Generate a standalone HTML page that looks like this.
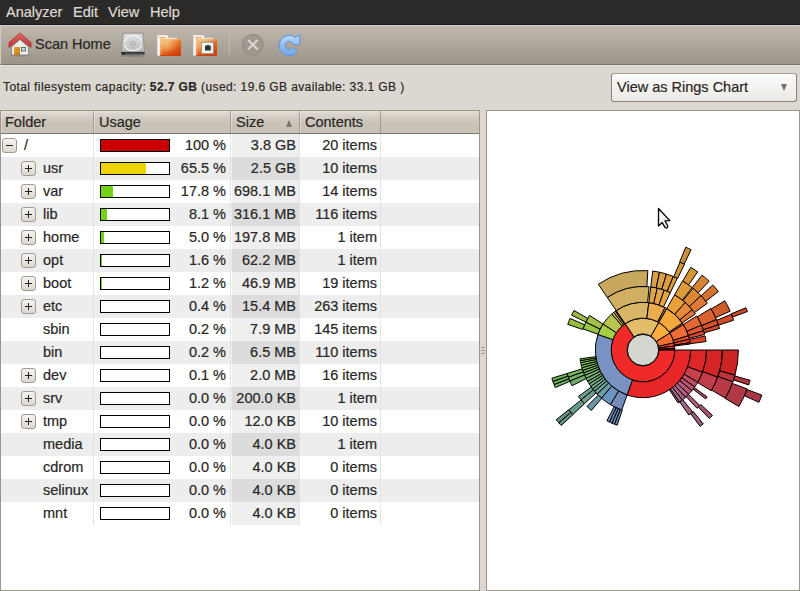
<!DOCTYPE html>
<html><head><meta charset="utf-8">
<style>
*{margin:0;padding:0;box-sizing:border-box}
html,body{-webkit-text-stroke:0.2px;width:800px;height:591px;overflow:hidden;background:#dcd8d1;font-family:"Liberation Sans",sans-serif;color:#282725}
.abs{position:absolute}
#menubar{left:0;top:0;width:800px;height:25px;background:#2c2a28;border-bottom:1px solid #1c1b19;color:#dfdbd2;font-size:14.5px}
#menubar span{position:absolute;top:4px}
#toolbar{left:0;top:25px;width:800px;height:40px;background:linear-gradient(#bfb8ae,#9c9488);border-top:1px solid #d2cdc5;border-bottom:1px solid #7a7268;border-left:1px solid #cfc9bf}
#tbhl{left:0;top:65px;width:800px;height:1px;background:#e6e2dc}
#info{left:3px;top:80px;font-size:12px;letter-spacing:0.4px;color:#282725;white-space:nowrap}
#combo{left:611px;top:73px;width:186px;height:29px;border:1px solid #8a8276;border-top-color:#a9a194;border-radius:3px;background:linear-gradient(#fbfbfa,#ece9e5);font-size:14.5px}
#combo .t{position:absolute;left:5px;top:5px}
#combo .arr{position:absolute;left:169px;top:10px;width:0;height:0;border-left:3.6px solid transparent;border-right:3.6px solid transparent;border-top:7px solid #707070}
#left{left:0;top:110px;width:480px;height:481px;background:#fff;border:1px solid #9c9486}
#right{left:486px;top:110px;width:314px;height:481px;background:#fff;border:1px solid #9c9486}
#hdr{left:1px;top:111px;width:478px;height:23px;background:linear-gradient(#e6e2dc 0px,#ddd8d0 2px,#d0c9bf 8px,#c9c2b7 13px,#c9c2b7 20px,#cec7bc 22px);border-bottom:1px solid #7d7568}
.hc{position:absolute;top:0;height:22px;border-right:1px solid #a59e92;font-size:14.5px;box-shadow:inset 1px 0 0 rgba(255,255,255,0.35)}
.hc span{position:absolute;top:3px}
.row{position:absolute;left:1px;width:478px;height:23px;font-size:14.5px}
.row.alt{background:#ededed}
.row span{position:absolute;top:3px;white-space:nowrap}
.vl{position:absolute;top:134px;height:391px;width:1px;background:#e3e3e3}
.sortcol{position:absolute;left:231px;width:68px;height:23px}
.bar{position:absolute;left:99px;top:5px;width:70px;height:13px;border:1px solid #000;background:#fff}
.bar i{position:absolute;left:0;top:0;bottom:0;display:block}
.exp{position:absolute;top:4px;width:15px;height:15px;border:1px solid #a29b90;border-radius:3px;background:linear-gradient(#f5f3f0,#dcd7cf)}
.exp:before{content:"";position:absolute;left:3px;top:6px;width:7px;height:1px;background:#222}
.exp.p:after{content:"";position:absolute;left:6px;top:3px;width:1px;height:7px;background:#222}
#bottom{left:0;top:590px;width:800px;height:1px;background:#8f877a}
</style></head><body>
<div id="menubar" class="abs"><span style="left:6px">Analyzer</span><span style="left:73px">Edit</span><span style="left:108px">View</span><span style="left:150px">Help</span></div>
<div id="toolbar" class="abs"></div><div id="tbhl" class="abs"></div>
<svg class="abs" style="left:0;top:25px" width="320" height="39" viewBox="0 25 320 39">
<defs>
<linearGradient id="roof" x1="0" y1="0" x2="0" y2="1"><stop offset="0" stop-color="#e26a6a"/><stop offset="1" stop-color="#c23030"/></linearGradient>
<linearGradient id="door" x1="0" y1="0" x2="1" y2="1"><stop offset="0" stop-color="#e9a830"/><stop offset="1" stop-color="#b87408"/></linearGradient>
<linearGradient id="disk" x1="0" y1="0" x2="0" y2="1"><stop offset="0" stop-color="#dedede"/><stop offset="0.5" stop-color="#d2d2d2"/><stop offset="1" stop-color="#b4b4b4"/></linearGradient>
<linearGradient id="diskb" x1="0" y1="0" x2="0" y2="1"><stop offset="0" stop-color="#2a2a2a"/><stop offset="0.6" stop-color="#5e5e5e"/><stop offset="1" stop-color="#8a8a8a"/></linearGradient>
<linearGradient id="fold" x1="0" y1="0" x2="0.6" y2="1"><stop offset="0" stop-color="#f5b060"/><stop offset="0.45" stop-color="#ea7a2a"/><stop offset="1" stop-color="#d2400c"/></linearGradient>
<linearGradient id="refr" x1="0" y1="0" x2="0" y2="1"><stop offset="0" stop-color="#b4d2f6"/><stop offset="1" stop-color="#74a6e6"/></linearGradient>
<radialGradient id="foldhl" cx="0.3" cy="0.25" r="0.6"><stop offset="0" stop-color="#f8d090" stop-opacity="0.75"/><stop offset="1" stop-color="#f8d090" stop-opacity="0"/></radialGradient>
</defs>
<!-- home -->
<g transform="translate(4,28)">
<ellipse cx="16" cy="27.5" rx="10" ry="1.2" fill="#000" opacity="0.12"/>
<path d="M7.5,19 L16,11.5 L24.5,19 L24.5,27 L7.5,27 Z" fill="#eeeeec" stroke="#888a85" stroke-width="1"/>
<rect x="10" y="19" width="6" height="8" fill="url(#door)"/>
<circle cx="14.6" cy="23.5" r="0.5" fill="#f8e060"/>
<rect x="17.5" y="19.5" width="4" height="3.5" fill="#c8dce4" stroke="#6a6a6a" stroke-width="1"/>
<path d="M5,14.5 L16,5 L27,14.5 L27,19.5 L16,10.5 L5,19.5 Z" fill="url(#roof)" stroke="#b02a2a" stroke-width="0.8" stroke-linejoin="round"/>
</g>
<!-- disk -->
<g transform="translate(116,28)">
<ellipse cx="16.8" cy="28" rx="12" ry="1.2" fill="#000" opacity="0.15"/>
<path d="M7.3,5.2 L26.8,5.2 L28.6,24 L5.1,24 Z" fill="url(#disk)" stroke="#8e8e8e" stroke-width="0.9"/>
<path d="M9,14 Q10,8 17,7.5 Q24.5,8 25.5,13" fill="none" stroke="#fafafa" stroke-width="1.1"/>
<path d="M8.5,16.5 Q10,22.5 17,22.5 Q24,22.5 25.5,17" fill="none" stroke="#f4f4f4" stroke-width="1.1"/>
<ellipse cx="16.8" cy="15.5" rx="2.6" ry="1.7" fill="none" stroke="#9a9a9a" stroke-width="0.8"/>
<rect x="5" y="24" width="23.7" height="3.8" rx="0.8" fill="url(#diskb)"/>
<rect x="6.5" y="25" width="2.2" height="1.4" fill="#0a0a0a"/>
</g>
<!-- folder -->
<g transform="translate(152,28)">
<path d="M5.4,7.3 L15.7,7.3 L16.5,10 L25.4,10 L25.4,27.6 L5.4,27.6 Z" fill="#fafafa" stroke="#d8d8d8" stroke-width="0.6"/>
<rect x="7" y="9" width="6.8" height="1.2" fill="#f0a060"/>
<rect x="7.9" y="10.8" width="21.1" height="17.1" fill="url(#fold)"/>
<rect x="7.9" y="10.8" width="21.1" height="17.1" fill="url(#foldhl)"/>
<path d="M9,27 L9,11.9 L28.5,11.9" fill="none" stroke="#f8d0a0" stroke-width="0.9" opacity="0.7"/><rect x="7.9" y="27" width="21.1" height="0.9" fill="#c03008" opacity="0.6"/>
</g>
<!-- folder remote -->
<g transform="translate(188,28)">
<path d="M5.4,7.3 L15.7,7.3 L16.5,10 L25.4,10 L25.4,27.6 L5.4,27.6 Z" fill="#fafafa" stroke="#d8d8d8" stroke-width="0.6"/>
<rect x="7" y="9" width="6.8" height="1.2" fill="#f0a060"/>
<rect x="7.9" y="10.8" width="21.1" height="17.1" fill="url(#fold)"/>
<rect x="7.9" y="10.8" width="21.1" height="17.1" fill="url(#foldhl)"/>
<path d="M9,27 L9,11.9 L28.5,11.9" fill="none" stroke="#f8d0a0" stroke-width="0.9" opacity="0.7"/><rect x="7.9" y="27" width="21.1" height="0.9" fill="#c03008" opacity="0.6"/>
<rect x="13.5" y="14.2" width="12" height="11.5" fill="#f2f2ef" stroke="#8a8a86" stroke-width="0.8"/>
<path d="M17,17.8 L18.6,17.8 L18.6,17 L21.2,17 L21.2,17.8 L22.8,17.8 L22.8,22.6 L17,22.6 Z" fill="#2e3436"/>
</g>
<!-- separator -->
<rect x="227.5" y="34.6" width="1" height="19.3" fill="#948c80" opacity="0.5"/>
<rect x="228.5" y="34.6" width="1" height="19.3" fill="#d8d2c8" opacity="0.7"/>
<!-- stop -->
<circle cx="252.8" cy="44.7" r="10.5" fill="#a0988f" stroke="#8f877e" stroke-width="0.8"/>
<path d="M248.6,40.5 L257,48.9 M257,40.5 L248.6,48.9" stroke="#dcd8d2" stroke-width="2" stroke-linecap="round"/>
<!-- refresh -->
<g transform="translate(274,30)">
<path d="M23.66,21.25 A10.2,10.2 0 1 1 21.3,7.1 L25.9,4.8 L25.9,14.7 L19.2,14.7 A4,4 0 1 0 18.58,17.69 Z" fill="url(#refr)" stroke="#5b95de" stroke-width="1" stroke-linejoin="round"/>
<path d="M9,12 A7,7 0 0 1 19,9" fill="none" stroke="#d4e6fa" stroke-width="1" opacity="0.7"/>
</g>
</svg>
<div class="abs" style="left:35px;top:36px;font-size:14.5px;color:#282725">Scan Home</div>
<div id="info" class="abs">Total filesystem capacity: <b>52.7 GB</b> (used: 19.6 GB available: 33.1 GB )</div>
<div id="combo" class="abs"><span class="t">View as Rings Chart</span><div class="arr"></div></div>
<div id="left" class="abs"></div>
<div id="right" class="abs"></div><!--chart--><svg class="abs" style="left:0;top:0" width="800" height="591" viewBox="0 0 800 591"><g stroke="#000" stroke-width="1" stroke-linejoin="miter"><path d="M658.90,350.00A15.90,15.90 0 1 1 634.06,336.85L625.13,323.70A31.80,31.80 0 1 0 674.80,350.00Z" fill="#f02929"/><path d="M634.06,336.85A15.90,15.90 0 0 1 650.93,336.22L658.85,322.43A31.80,31.80 0 0 0 625.13,323.70Z" fill="#e1bd6a"/><path d="M650.93,336.22A15.90,15.90 0 0 1 656.44,341.50L669.88,333.01A31.80,31.80 0 0 0 658.85,322.43Z" fill="#fcad40"/><path d="M656.44,341.50A15.90,15.90 0 0 1 658.49,346.42L673.98,342.85A31.80,31.80 0 0 0 669.88,333.01Z" fill="#f77035"/><path d="M658.49,346.42A15.90,15.90 0 0 1 658.77,348.01L674.55,346.01A31.80,31.80 0 0 0 673.98,342.85Z" fill="#f2462e"/><path d="M658.77,348.01A15.90,15.90 0 0 1 658.88,349.20L674.76,348.39A31.80,31.80 0 0 0 674.55,346.01Z" fill="#f1392c"/><path d="M658.88,349.20A15.90,15.90 0 0 1 658.90,349.83L674.80,349.67A31.80,31.80 0 0 0 674.76,348.39Z" fill="#f02f2a"/><path d="M674.80,350.00A31.80,31.80 0 0 1 632.38,379.98L627.08,394.96A47.70,47.70 0 0 0 690.70,350.00Z" fill="#e72727"/><path d="M632.38,379.98A31.80,31.80 0 0 1 612.93,339.65L597.90,334.47A47.70,47.70 0 0 0 627.08,394.96Z" fill="#7893c2"/><path d="M612.93,339.65A31.80,31.80 0 0 1 616.33,332.68L603.00,324.02A47.70,47.70 0 0 0 597.90,334.47Z" fill="#a1ce43"/><path d="M616.33,332.68A31.80,31.80 0 0 1 622.18,325.96L611.77,313.95A47.70,47.70 0 0 0 603.00,324.02Z" fill="#b6c550"/><path d="M622.18,325.96A31.80,31.80 0 0 1 623.51,324.87L613.76,312.31A47.70,47.70 0 0 0 611.77,313.95Z" fill="#cfba5f"/><path d="M623.51,324.87A31.80,31.80 0 0 1 624.58,324.08L615.37,311.12A47.70,47.70 0 0 0 613.76,312.31Z" fill="#d4b862"/><path d="M624.58,324.08A31.80,31.80 0 0 1 625.13,323.70L616.19,310.55A47.70,47.70 0 0 0 615.37,311.12Z" fill="#d7b764"/><path d="M625.13,323.70A31.80,31.80 0 0 1 646.88,318.44L648.81,302.66A47.70,47.70 0 0 0 616.19,310.55Z" fill="#d9b666"/><path d="M646.88,318.44A31.80,31.80 0 0 1 657.68,321.79L665.03,307.69A47.70,47.70 0 0 0 648.81,302.66Z" fill="#ebac4e"/><path d="M657.68,321.79A31.80,31.80 0 0 1 658.66,322.32L666.49,308.48A47.70,47.70 0 0 0 665.03,307.69Z" fill="#f2a73f"/><path d="M658.85,322.43A31.80,31.80 0 0 1 669.27,332.08L682.40,323.12A47.70,47.70 0 0 0 666.78,308.65Z" fill="#f3a73d"/><path d="M669.27,332.08A31.80,31.80 0 0 1 669.88,333.01L683.32,324.51A47.70,47.70 0 0 0 682.40,323.12Z" fill="#ee7034"/><path d="M669.88,333.01A31.80,31.80 0 0 1 673.33,340.44L688.49,335.66A47.70,47.70 0 0 0 683.32,324.51Z" fill="#ed6c33"/><path d="M673.33,340.44A31.80,31.80 0 0 1 673.98,342.85L689.48,339.27A47.70,47.70 0 0 0 688.49,335.66Z" fill="#ea4c2e"/><path d="M673.98,342.85A31.80,31.80 0 0 1 674.43,345.14L690.14,342.70A47.70,47.70 0 0 0 689.48,339.27Z" fill="#e9432c"/><path d="M674.43,345.14A31.80,31.80 0 0 1 674.55,346.01L690.32,344.02A47.70,47.70 0 0 0 690.14,342.70Z" fill="#e93a2b"/><path d="M690.70,350.00A47.70,47.70 0 0 1 687.65,366.78L702.53,372.38A63.60,63.60 0 0 0 706.60,350.00Z" fill="#de2626"/><path d="M687.65,366.78A47.70,47.70 0 0 1 684.10,374.21L697.80,382.28A63.60,63.60 0 0 0 702.53,372.38Z" fill="#c9404e"/><path d="M684.10,374.21A47.70,47.70 0 0 1 681.78,377.77L694.71,387.02A63.60,63.60 0 0 0 697.80,382.28Z" fill="#bf4d62"/><path d="M681.78,377.77A47.70,47.70 0 0 1 679.65,380.53L691.86,390.71A63.60,63.60 0 0 0 694.71,387.02Z" fill="#b9546c"/><path d="M679.65,380.53A47.70,47.70 0 0 1 677.20,383.25L688.60,394.34A63.60,63.60 0 0 0 691.86,390.71Z" fill="#b55974"/><path d="M677.20,383.25A47.70,47.70 0 0 1 674.79,385.56L685.39,397.41A63.60,63.60 0 0 0 688.60,394.34Z" fill="#b15f7d"/><path d="M674.79,385.56A47.70,47.70 0 0 1 672.50,387.49L682.33,399.98A63.60,63.60 0 0 0 685.39,397.41Z" fill="#ac6484"/><path d="M672.50,387.49A47.70,47.70 0 0 1 670.36,389.07L679.48,402.10A63.60,63.60 0 0 0 682.33,399.98Z" fill="#a9698c"/><path d="M670.36,389.07A47.70,47.70 0 0 1 669.33,389.78L678.10,403.04A63.60,63.60 0 0 0 679.48,402.10Z" fill="#a66d92"/><path d="M627.08,394.96A47.70,47.70 0 0 1 618.58,390.97L610.43,404.63A63.60,63.60 0 0 0 621.77,409.95Z" fill="#748dbb"/><path d="M618.58,390.97A47.70,47.70 0 0 1 611.77,386.05L601.36,398.07A63.60,63.60 0 0 0 610.43,404.63Z" fill="#6a93bf"/><path d="M611.77,386.05A47.70,47.70 0 0 1 608.57,383.02L597.10,394.02A63.60,63.60 0 0 0 601.36,398.07Z" fill="#6e9ea7"/><path d="M608.57,383.02A47.70,47.70 0 0 1 606.67,380.92L594.57,391.22A63.60,63.60 0 0 0 597.10,394.02Z" fill="#70a39a"/><path d="M606.67,380.92A47.70,47.70 0 0 1 605.26,379.17L592.68,388.89A63.60,63.60 0 0 0 594.57,391.22Z" fill="#71a792"/><path d="M605.26,379.17A47.70,47.70 0 0 1 603.88,377.29L590.84,386.39A63.60,63.60 0 0 0 592.68,388.89Z" fill="#72aa8b"/><path d="M603.88,377.29A47.70,47.70 0 0 1 602.59,375.35L589.12,383.80A63.60,63.60 0 0 0 590.84,386.39Z" fill="#73ad84"/><path d="M602.59,375.35A47.70,47.70 0 0 1 601.48,373.49L587.65,381.32A63.60,63.60 0 0 0 589.12,383.80Z" fill="#74b07d"/><path d="M601.48,373.49A47.70,47.70 0 0 1 600.31,371.28L586.08,378.38A63.60,63.60 0 0 0 587.65,381.32Z" fill="#75b377"/><path d="M600.31,371.28A47.70,47.70 0 0 1 599.26,369.02L584.67,375.36A63.60,63.60 0 0 0 586.08,378.38Z" fill="#76b670"/><path d="M599.26,369.02A47.70,47.70 0 0 1 598.47,367.09L583.62,372.79A63.60,63.60 0 0 0 584.67,375.36Z" fill="#77b968"/><path d="M598.47,367.09A47.70,47.70 0 0 1 597.79,365.21L582.72,370.29A63.60,63.60 0 0 0 583.62,372.79Z" fill="#78bc62"/><path d="M597.79,365.21A47.70,47.70 0 0 1 597.19,363.31L581.93,367.74A63.60,63.60 0 0 0 582.72,370.29Z" fill="#79be5d"/><path d="M597.19,363.31A47.70,47.70 0 0 1 596.70,361.46L581.26,365.28A63.60,63.60 0 0 0 581.93,367.74Z" fill="#7ac157"/><path d="M596.70,361.46A47.70,47.70 0 0 1 596.26,359.51L580.68,362.68A63.60,63.60 0 0 0 581.26,365.28Z" fill="#7ac351"/><path d="M596.26,359.51A47.70,47.70 0 0 1 595.97,357.95L580.29,360.61A63.60,63.60 0 0 0 580.68,362.68Z" fill="#7bc64b"/><path d="M595.97,357.95A47.70,47.70 0 0 1 595.76,356.64L580.02,358.85A63.60,63.60 0 0 0 580.29,360.61Z" fill="#7cc847"/><path d="M598.01,334.16A47.70,47.70 0 0 1 600.13,329.09L585.84,322.12A63.60,63.60 0 0 0 583.01,328.87Z" fill="#9cc641"/><path d="M600.13,329.09A47.70,47.70 0 0 1 602.95,324.09L589.60,315.45A63.60,63.60 0 0 0 585.84,322.12Z" fill="#a5c247"/><path d="M616.19,310.55A47.70,47.70 0 0 1 647.57,302.52L649.10,286.69A63.60,63.60 0 0 0 607.25,297.40Z" fill="#d1af62"/><path d="M648.81,302.66A47.70,47.70 0 0 1 653.73,303.52L657.31,288.03A63.60,63.60 0 0 0 650.75,286.87Z" fill="#e2a54b"/><path d="M653.73,303.52A47.70,47.70 0 0 1 658.92,305.04L664.23,290.05A63.60,63.60 0 0 0 657.31,288.03Z" fill="#e4a447"/><path d="M658.92,305.04A47.70,47.70 0 0 1 663.54,306.95L670.38,292.60A63.60,63.60 0 0 0 664.23,290.05Z" fill="#e6a242"/><path d="M666.71,308.61A47.70,47.70 0 0 1 674.67,314.33L685.23,302.44A63.60,63.60 0 0 0 674.61,294.81Z" fill="#e9a03b"/><path d="M674.67,314.33A47.70,47.70 0 0 1 679.91,319.79L692.22,309.72A63.60,63.60 0 0 0 685.23,302.44Z" fill="#e78937"/><path d="M679.91,319.79A47.70,47.70 0 0 1 682.26,322.91L695.35,313.89A63.60,63.60 0 0 0 692.22,309.72Z" fill="#e57634"/><path d="M683.32,324.51A47.70,47.70 0 0 1 686.91,331.36L701.54,325.15A63.60,63.60 0 0 0 696.76,316.02Z" fill="#e46831"/><path d="M686.91,331.36A47.70,47.70 0 0 1 688.44,335.50L703.59,330.66A63.60,63.60 0 0 0 701.54,325.15Z" fill="#e2552e"/><path d="M688.44,335.50A47.70,47.70 0 0 1 689.24,338.30L704.66,334.40A63.60,63.60 0 0 0 703.59,330.66Z" fill="#e14a2c"/><path d="M689.51,339.43A47.70,47.70 0 0 1 690.28,343.69L706.04,341.59A63.60,63.60 0 0 0 705.02,335.91Z" fill="#e0402a"/><path d="M706.60,350.00A63.60,63.60 0 0 1 702.76,371.75L717.71,377.19A79.50,79.50 0 0 0 722.50,350.00Z" fill="#d52424"/><path d="M702.76,371.75A63.60,63.60 0 0 1 697.63,382.57L711.29,390.71A79.50,79.50 0 0 0 717.71,377.19Z" fill="#c13d4a"/><path d="M694.32,387.56A63.60,63.60 0 0 1 693.12,389.16L705.65,398.95A79.50,79.50 0 0 0 707.15,396.95Z" fill="#b15168"/><path d="M688.52,394.42A63.60,63.60 0 0 1 686.21,396.67L697.02,408.33A79.50,79.50 0 0 0 699.90,405.52Z" fill="#a95b78"/><path d="M682.77,399.64A63.60,63.60 0 0 1 679.66,401.97L688.83,414.96A79.50,79.50 0 0 0 692.71,412.04Z" fill="#a26485"/><path d="M622.29,410.13A63.60,63.60 0 0 1 620.21,409.38L614.51,424.22A79.50,79.50 0 0 0 617.12,425.17Z" fill="#6f87b3"/><path d="M620.21,409.38A63.60,63.60 0 0 1 618.15,408.54L611.94,423.18A79.50,79.50 0 0 0 614.51,424.22Z" fill="#6e88b4"/><path d="M618.15,408.54A63.60,63.60 0 0 1 616.12,407.64L609.40,422.05A79.50,79.50 0 0 0 611.94,423.18Z" fill="#6c89b5"/><path d="M616.12,407.64A63.60,63.60 0 0 1 614.13,406.67L606.91,420.84A79.50,79.50 0 0 0 609.40,422.05Z" fill="#6a8ab7"/><path d="M601.70,398.36A63.60,63.60 0 0 1 598.19,395.13L586.98,406.41A79.50,79.50 0 0 0 591.37,410.45Z" fill="#6997a1"/><path d="M596.11,392.97A63.60,63.60 0 0 1 593.36,389.77L580.96,399.71A79.50,79.50 0 0 0 584.39,403.71Z" fill="#6c9e91"/><path d="M593.36,389.77A63.60,63.60 0 0 1 591.35,387.11L578.44,396.39A79.50,79.50 0 0 0 580.96,399.71Z" fill="#6da288"/><path d="M586.18,378.58A63.60,63.60 0 0 1 584.46,374.85L569.82,381.06A79.50,79.50 0 0 0 571.98,385.72Z" fill="#71ae6c"/><path d="M584.46,374.85A63.60,63.60 0 0 1 583.24,371.75L568.29,377.19A79.50,79.50 0 0 0 569.82,381.06Z" fill="#72b263"/><path d="M583.24,371.75A63.60,63.60 0 0 1 582.24,368.81L567.06,373.51A79.50,79.50 0 0 0 568.29,377.19Z" fill="#73b55c"/><path d="M582.79,329.50A63.60,63.60 0 0 1 584.63,324.74L570.04,318.43A79.50,79.50 0 0 0 567.74,324.38Z" fill="#94be3e"/><path d="M585.84,322.12A63.60,63.60 0 0 1 587.81,318.39L574.01,310.49A79.50,79.50 0 0 0 571.55,315.15Z" fill="#9eba44"/><path d="M607.25,297.40A63.60,63.60 0 0 1 646.88,286.52L647.85,270.65A79.50,79.50 0 0 0 598.31,284.25Z" fill="#c8a85e"/><path d="M650.75,286.87A63.60,63.60 0 0 1 656.22,287.79L659.53,272.24A79.50,79.50 0 0 0 652.69,271.09Z" fill="#d99e48"/><path d="M656.22,287.79A63.60,63.60 0 0 1 661.81,289.24L666.51,274.06A79.50,79.50 0 0 0 659.53,272.24Z" fill="#db9d45"/><path d="M661.81,289.24A63.60,63.60 0 0 1 667.24,291.20L673.30,276.50A79.50,79.50 0 0 0 666.51,274.06Z" fill="#dc9c41"/><path d="M667.24,291.20A63.60,63.60 0 0 1 670.38,292.60L677.23,278.24A79.50,79.50 0 0 0 673.30,276.50Z" fill="#de9b3e"/><path d="M674.61,294.81A63.60,63.60 0 0 1 682.33,300.02L692.16,287.52A79.50,79.50 0 0 0 682.51,281.01Z" fill="#e09a39"/><path d="M683.02,300.57A63.60,63.60 0 0 1 689.36,306.46L700.95,295.58A79.50,79.50 0 0 0 693.03,288.22Z" fill="#de8836"/><path d="M689.36,306.46A63.60,63.60 0 0 1 694.45,312.62L707.32,303.27A79.50,79.50 0 0 0 700.95,295.58Z" fill="#dd7933"/><path d="M697.23,316.77A63.60,63.60 0 0 1 701.76,325.66L716.45,319.58A79.50,79.50 0 0 0 710.78,308.46Z" fill="#db622f"/><path d="M701.76,325.66A63.60,63.60 0 0 1 703.31,329.82L718.39,324.77A79.50,79.50 0 0 0 716.45,319.58Z" fill="#d9502c"/><path d="M703.31,329.82A63.60,63.60 0 0 1 704.23,332.79L719.53,328.49A79.50,79.50 0 0 0 718.39,324.77Z" fill="#d8482a"/><path d="M722.50,350.00A79.50,79.50 0 0 1 719.68,370.98L735.02,375.17A95.40,95.40 0 0 0 738.40,350.00Z" fill="#cc2323"/><path d="M719.68,370.98A79.50,79.50 0 0 1 717.94,376.54L732.93,381.85A95.40,95.40 0 0 0 735.02,375.17Z" fill="#bd353e"/><path d="M717.94,376.54A79.50,79.50 0 0 1 711.64,390.11L725.37,398.13A95.40,95.40 0 0 0 732.93,381.85Z" fill="#b93a46"/><path d="M700.86,404.52A79.50,79.50 0 0 1 698.33,407.09L709.39,418.51A95.40,95.40 0 0 0 712.43,415.43Z" fill="#a35671"/><path d="M693.25,411.61A79.50,79.50 0 0 1 690.62,413.66L700.15,426.39A95.40,95.40 0 0 0 703.30,423.93Z" fill="#9c5f7e"/><path d="M584.48,403.81A79.50,79.50 0 0 1 581.13,399.92L568.76,409.91A95.40,95.40 0 0 0 572.78,414.57Z" fill="#67978b"/><path d="M569.93,381.32A79.50,79.50 0 0 1 568.88,378.75L554.06,384.50A95.40,95.40 0 0 0 555.31,387.58Z" fill="#6eaa5f"/><path d="M568.88,378.75A79.50,79.50 0 0 1 567.92,376.14L552.91,381.37A95.40,95.40 0 0 0 554.06,384.50Z" fill="#6eac5b"/><path d="M567.92,376.14A79.50,79.50 0 0 1 567.06,373.51L551.87,378.21A95.40,95.40 0 0 0 552.91,381.37Z" fill="#6fae56"/><path d="M673.81,276.71A79.50,79.50 0 0 1 677.60,278.42L684.52,264.11A95.40,95.40 0 0 0 679.97,262.05Z" fill="#d5953b"/><path d="M682.75,281.15A79.50,79.50 0 0 1 688.60,284.88L697.72,271.85A95.40,95.40 0 0 0 690.70,267.38Z" fill="#d79336"/><path d="M692.27,287.61A79.50,79.50 0 0 1 698.13,292.72L709.15,281.26A95.40,95.40 0 0 0 702.13,275.13Z" fill="#d58433"/><path d="M701.14,295.78A79.50,79.50 0 0 1 705.82,301.27L718.38,291.53A95.40,95.40 0 0 0 712.77,284.94Z" fill="#d47331"/><path d="M711.14,309.05A79.50,79.50 0 0 1 715.63,317.66L730.15,311.20A95.40,95.40 0 0 0 724.77,300.87Z" fill="#d15d2d"/><path d="M716.71,320.22A79.50,79.50 0 0 1 718.52,325.17L733.63,320.20A95.40,95.40 0 0 0 731.45,314.26Z" fill="#d04c2a"/><path d="M734.80,375.98A95.40,95.40 0 0 1 733.58,379.95L748.67,384.95A111.30,111.30 0 0 0 750.09,380.30Z" fill="#b5333c"/><path d="M732.36,383.41A95.40,95.40 0 0 1 725.20,398.42L738.90,406.49A111.30,111.30 0 0 0 747.25,388.98Z" fill="#b03945"/><path d="M572.89,414.70A95.40,95.40 0 0 1 570.78,412.34L558.75,422.73A111.30,111.30 0 0 0 561.20,425.48Z" fill="#639185"/><path d="M570.78,412.34A95.40,95.40 0 0 1 568.65,409.78L556.26,419.74A111.30,111.30 0 0 0 558.75,422.73Z" fill="#639281"/><path d="M679.66,261.93A95.40,95.40 0 0 1 684.22,263.97L691.09,249.63A111.30,111.30 0 0 0 685.77,247.25Z" fill="#cb8e38"/><path d="M731.27,313.80A95.40,95.40 0 0 1 732.53,317.06L747.45,311.57A111.30,111.30 0 0 0 745.98,307.77Z" fill="#c74928"/><path d="M747.05,389.52A111.30,111.30 0 0 1 744.44,395.80L758.93,402.34A127.20,127.20 0 0 0 761.91,395.17Z" fill="#a83642"/><circle cx="643.0" cy="350.0" r="15.6" fill="#d3d7cf"/></g></svg><!--/chart-->
<div id="hdr" class="abs">
 <div class="hc" style="left:0;width:93px"><span style="left:4px">Folder</span></div>
 <div class="hc" style="left:93px;width:137px"><span style="left:5px">Usage</span></div>
 <div class="hc" style="left:230px;width:69px"><span style="left:5px">Size</span><div style="position:absolute;left:55px;top:9px;width:0;height:0;border-left:3.5px solid transparent;border-right:3.5px solid transparent;border-bottom:7px solid #7a766f"></div></div>
 <div class="hc" style="left:299px;width:81px"><span style="left:5px">Contents</span></div>
</div>
<div id="rows"><div class="row" style="top:134px"><div class="sortcol" style="background:#efefef"></div><div class="exp " style="left:1px"></div><span style="left:23px">/</span><div class="bar"><i style="width:68px;background:#cc0000"></i></div><span class="r" style="right:253px">100 %</span><span class="r" style="right:183px">3.8 GB</span><span class="r" style="right:102px">20 items</span></div><div class="row alt" style="top:157px"><div class="sortcol" style="background:#dcdcdc"></div><div class="exp p" style="left:20px"></div><span style="left:42px">usr</span><div class="bar"><i style="width:45px;background:#edd400"></i></div><span class="r" style="right:253px">65.5 %</span><span class="r" style="right:183px">2.5 GB</span><span class="r" style="right:102px">10 items</span></div><div class="row" style="top:180px"><div class="sortcol" style="background:#efefef"></div><div class="exp p" style="left:20px"></div><span style="left:42px">var</span><div class="bar"><i style="width:12px;background:#73d216"></i></div><span class="r" style="right:253px">17.8 %</span><span class="r" style="right:183px">698.1 MB</span><span class="r" style="right:102px">14 items</span></div><div class="row alt" style="top:203px"><div class="sortcol" style="background:#dcdcdc"></div><div class="exp p" style="left:20px"></div><span style="left:42px">lib</span><div class="bar"><i style="width:6px;background:#73d216"></i></div><span class="r" style="right:253px">8.1 %</span><span class="r" style="right:183px">316.1 MB</span><span class="r" style="right:102px">116 items</span></div><div class="row" style="top:226px"><div class="sortcol" style="background:#efefef"></div><div class="exp p" style="left:20px"></div><span style="left:42px">home</span><div class="bar"><i style="width:3px;background:#73d216"></i></div><span class="r" style="right:253px">5.0 %</span><span class="r" style="right:183px">197.8 MB</span><span class="r" style="right:102px">1 item</span></div><div class="row alt" style="top:249px"><div class="sortcol" style="background:#dcdcdc"></div><div class="exp p" style="left:20px"></div><span style="left:42px">opt</span><div class="bar"><i style="width:1px;background:#73d216"></i></div><span class="r" style="right:253px">1.6 %</span><span class="r" style="right:183px">62.2 MB</span><span class="r" style="right:102px">1 item</span></div><div class="row" style="top:272px"><div class="sortcol" style="background:#efefef"></div><div class="exp p" style="left:20px"></div><span style="left:42px">boot</span><div class="bar"><i style="width:1px;background:#73d216"></i></div><span class="r" style="right:253px">1.2 %</span><span class="r" style="right:183px">46.9 MB</span><span class="r" style="right:102px">19 items</span></div><div class="row alt" style="top:295px"><div class="sortcol" style="background:#dcdcdc"></div><div class="exp p" style="left:20px"></div><span style="left:42px">etc</span><div class="bar"></div><span class="r" style="right:253px">0.4 %</span><span class="r" style="right:183px">15.4 MB</span><span class="r" style="right:102px">263 items</span></div><div class="row" style="top:318px"><div class="sortcol" style="background:#efefef"></div><span style="left:42px">sbin</span><div class="bar"></div><span class="r" style="right:253px">0.2 %</span><span class="r" style="right:183px">7.9 MB</span><span class="r" style="right:102px">145 items</span></div><div class="row alt" style="top:341px"><div class="sortcol" style="background:#dcdcdc"></div><span style="left:42px">bin</span><div class="bar"></div><span class="r" style="right:253px">0.2 %</span><span class="r" style="right:183px">6.5 MB</span><span class="r" style="right:102px">110 items</span></div><div class="row" style="top:364px"><div class="sortcol" style="background:#efefef"></div><div class="exp p" style="left:20px"></div><span style="left:42px">dev</span><div class="bar"></div><span class="r" style="right:253px">0.1 %</span><span class="r" style="right:183px">2.0 MB</span><span class="r" style="right:102px">16 items</span></div><div class="row alt" style="top:387px"><div class="sortcol" style="background:#dcdcdc"></div><div class="exp p" style="left:20px"></div><span style="left:42px">srv</span><div class="bar"></div><span class="r" style="right:253px">0.0 %</span><span class="r" style="right:183px">200.0 KB</span><span class="r" style="right:102px">1 item</span></div><div class="row" style="top:410px"><div class="sortcol" style="background:#efefef"></div><div class="exp p" style="left:20px"></div><span style="left:42px">tmp</span><div class="bar"></div><span class="r" style="right:253px">0.0 %</span><span class="r" style="right:183px">12.0 KB</span><span class="r" style="right:102px">10 items</span></div><div class="row alt" style="top:433px"><div class="sortcol" style="background:#dcdcdc"></div><span style="left:42px">media</span><div class="bar"></div><span class="r" style="right:253px">0.0 %</span><span class="r" style="right:183px">4.0 KB</span><span class="r" style="right:102px">1 item</span></div><div class="row" style="top:456px"><div class="sortcol" style="background:#efefef"></div><span style="left:42px">cdrom</span><div class="bar"></div><span class="r" style="right:253px">0.0 %</span><span class="r" style="right:183px">4.0 KB</span><span class="r" style="right:102px">0 items</span></div><div class="row alt" style="top:479px"><div class="sortcol" style="background:#dcdcdc"></div><span style="left:42px">selinux</span><div class="bar"></div><span class="r" style="right:253px">0.0 %</span><span class="r" style="right:183px">4.0 KB</span><span class="r" style="right:102px">0 items</span></div><div class="row" style="top:502px"><div class="sortcol" style="background:#efefef"></div><span style="left:42px">mnt</span><div class="bar"></div><span class="r" style="right:253px">0.0 %</span><span class="r" style="right:183px">4.0 KB</span><span class="r" style="right:102px">0 items</span></div><div class="vl" style="left:93px"></div><div class="vl" style="left:230px"></div><div class="vl" style="left:299px"></div><div class="vl" style="left:380px"></div></div><!--rows-->
<div class="abs" style="left:481px;top:347px;width:4px;height:1px;background:#a39b8e"></div>
<div class="abs" style="left:481px;top:350px;width:4px;height:1px;background:#a39b8e"></div>
<div class="abs" style="left:481px;top:353px;width:4px;height:1px;background:#a39b8e"></div>
<svg class="abs" style="left:650px;top:200px" width="30" height="35" viewBox="0 0 30 35"><defs><linearGradient id="cur" x1="0" y1="0" x2="1" y2="1"><stop offset="0" stop-color="#ffffff"/><stop offset="1" stop-color="#e4e4e4"/></linearGradient></defs>
<path d="M8.5,8.5 L8.5,26 L12.2,22.6 L15,27.4 Q16,28.3 17.2,27.6 Q18,27 17.6,25.8 L15,20.8 L19.8,20.6 Z" fill="url(#cur)" stroke="#000" stroke-width="1.3" stroke-linejoin="round"/></svg>
</body></html>
